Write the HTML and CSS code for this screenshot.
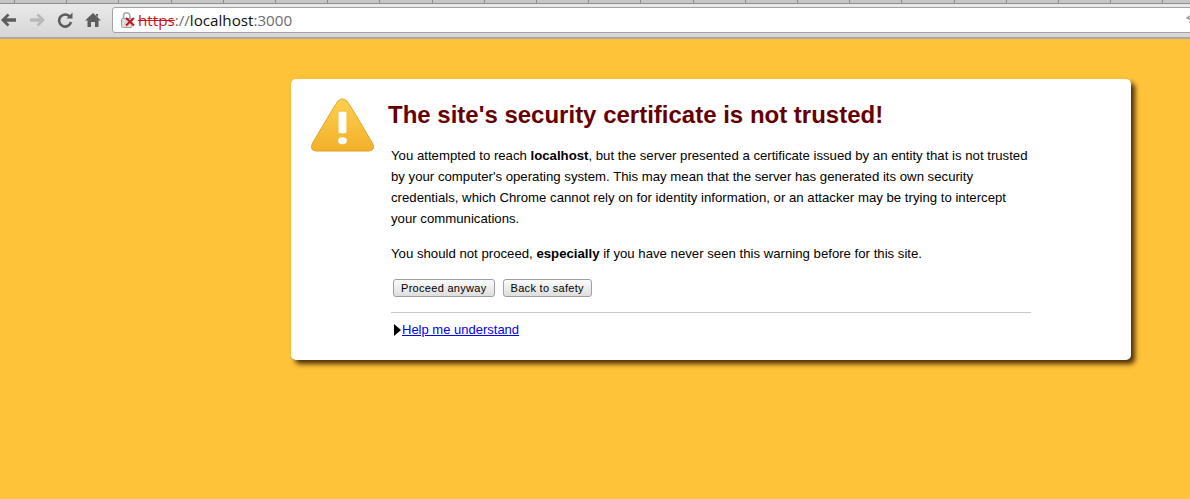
FILE: index.html
```html
<!DOCTYPE html>
<html lang="en">
<head>
  <meta charset="UTF-8" />
  <title>Security Error</title>
  <link rel="stylesheet" href="styles.css">
</head>
<body>
  <div class="tabstrip"></div>
  <div class="toolbar">
    <svg class="nav-icon back" width="17" height="16" viewBox="0 0 17 16"><path d="M1 8 L7.500 1.500 L9.500 3.500 L6.500 6.300 H16 V9.700 H6.500 L9.500 12.500 L7.500 14.500 Z" fill="#5d5d5d"/></svg>
    <svg class="nav-icon forward" width="17" height="16" viewBox="0 0 17 16"><path d="M16 8 L9.500 1.500 L7.500 3.500 L10.500 6.300 H1 V9.700 H10.500 L7.500 12.500 L9.500 14.500 Z" fill="#b9b9b9"/></svg>
    <svg class="nav-icon reload" width="16" height="16" viewBox="0 0 16 16"><path d="M13 5 A6 6 0 1 0 14 10" fill="none" stroke="#5d5d5d" stroke-width="2.600"/><path d="M9.500 6.500 H15.500 V0.500 Z" fill="#5d5d5d"/></svg>
    <svg class="nav-icon home" width="16" height="16" viewBox="0 0 16 16"><path d="M8 1 L16 8.500 H13.500 V15 H10 V10 H6 V15 H2.500 V8.500 H0 Z M11 2 H13 V5 L11 3.200 Z" fill="#5d5d5d"/></svg>
    <div class="omnibox">
      <svg class="lock" width="16" height="17" viewBox="0 0 16 17">
        <path d="M3.500 6.500 V4 A3.200 3.200 0 0 1 9.900 4 V6.500" fill="none" stroke="#a8a8a8" stroke-width="1.600"/>
        <rect x="1.500" y="6.500" width="10.500" height="9" rx="1" fill="#dcdcdc" stroke="#a0a0a0"/>
        <path d="M6 6 L14 13.500 M14 6 L6 13.500" stroke="#c8151b" stroke-width="2"/>
      </svg>
      <span class="url"><s class="scheme">https</s><span class="dim">://</span><span class="host">localhost</span><span class="dim">:3000</span></span>
      <svg class="star" width="6" height="12" viewBox="0 0 6 12"><path d="M6 1 L1 4 L3 5 L6 5 M3 8 L6 8" fill="none" stroke="#9a9a9a" stroke-width="1.500"/></svg>
    </div>
  </div>

  <div class="card">
    <svg class="warning" width="65" height="55" viewBox="0 0 66 56">
      <defs>
        <linearGradient id="warn" x1="0" y1="0" x2="0" y2="1">
          <stop offset="0" stop-color="#fdd04f"/>
          <stop offset="1" stop-color="#f2b02b"/>
        </linearGradient>
      </defs>
      <path d="M28.500 3 Q33 -1 37.500 3 Q40 6 63.500 46 Q67 53 60 54 H6 Q-1 53 2.500 46 Q26 6 28.500 3 Z" fill="url(#warn)" stroke="#dfa024" stroke-width="1"/>
      <rect x="29" y="14" width="8" height="22" rx="1.500" fill="#fff"/>
      <ellipse cx="33" cy="43.500" rx="4.500" ry="3.500" fill="#fff"/>
    </svg>
    <div class="main">
      <h1>The site's security certificate is not trusted!</h1>
      <div class="body-text">
        <p>You attempted to reach <b>localhost</b>, but the server presented a certificate issued by an entity that is not trusted by your computer's operating system. This may mean that the server has generated its own security credentials, which Chrome cannot rely on for identity information, or an attacker may be trying to intercept your communications.</p>
        <p>You should not proceed, <b>especially</b> if you have never seen this warning before for this site.</p>
        <div class="buttons">
          <button type="button">Proceed anyway</button>
          <button type="button">Back to safety</button>
        </div>
        <hr>
        <div class="help"><span class="arrow"></span><a href="#">Help me understand</a></div>
      </div>
    </div>
  </div>
</body>
</html>
```

FILE: styles.css
```css
* {
  box-sizing: border-box;
}

html, body {
  height: 100%;
}

body {
  margin: 0;
  background: #fec339;
  font-family: 'Liberation Sans', Arial, sans-serif;
  font-size: 13px;
  color: #000;
  overflow: hidden;
}

.tabstrip {
  height: 4px;
  border-bottom: 1px solid #8f8f8f;
  background: repeating-linear-gradient(90deg, #c6c6c6 0, #c6c6c6 14px, #8d8d8d 14px, #8d8d8d 15px, #c6c6c6 15px, #c6c6c6 52.200px);
}

.toolbar {
  display: flex;
  align-items: center;
  height: 35px;
  background: linear-gradient(#e9e9e9, #d6d6d6);
  border-bottom: 2px solid #a9a9a9;
  padding-bottom: 1px;
}

.nav-icon {
  flex: none;
}

.forward { margin-left: 12px; }
.reload { margin-left: 11px; }
.home { margin-left: 12px; }

.omnibox {
  display: flex;
  align-items: center;
  flex: 1;
  height: 26px;
  margin-left: 11px;
  margin-right: -6px;
  padding-left: 7px;
  background: #fff;
  border: 1px solid #a4a4a4;
  border-radius: 3px;
}

.url {
  margin-left: 2px;
  font-family: 'Open Sans', 'Liberation Sans', sans-serif;
  font-size: 15.200px;
}

.scheme {
  color: #c8151b;
}

.dim {
  color: #6d6d6d;
}

.host {
  color: #111;
}

.star {
  margin-left: auto;
  margin-right: 3px;
}

.card {
  display: flex;
  width: 840px;
  height: 281px;
  margin: 40px 0 0 291px;
  padding: 19px 0 0 19px;
  background: #fff;
  border-radius: 5px;
  box-shadow: 4px 4px 5px rgba(60, 32, 0, 0.9);
}

.warning {
  flex: none;
}

.main {
  margin-left: 13px;
  width: 660px;
}

h1 {
  margin: 1px 0 0;
  color: #660000;
  font-size: 24px;
  line-height: 32px;
  font-weight: bold;
  white-space: nowrap;
}

.body-text {
  margin: 14px 0 0 3px;
  width: 640px;
  font-size: 13.200px;
  line-height: 21px;
}

p {
  margin: 0 0 14px;
}

.buttons {
  display: flex;
  gap: 8px;
  margin: 15px 0 0 2px;
}

button {
  height: 18px;
  padding: 0 7px;
  font-family: 'Liberation Sans', Arial, sans-serif;
  font-size: 11px;
  letter-spacing: 0.300px;
  color: #000;
  background: linear-gradient(#fbfbfb, #dedede);
  border: 1px solid #a0a0a0;
  border-radius: 3px;
}

hr {
  height: 1px;
  margin: 15px 0 6px;
  border: 0;
  background: #c8c8c8;
}

.help {
  display: flex;
  align-items: center;
  padding-left: 3px;
  font-size: 13px;
}

.arrow {
  width: 0;
  height: 0;
  border-left: 7px solid #000;
  border-top: 6px solid transparent;
  border-bottom: 6px solid transparent;
  margin-right: 1px;
}

a {
  color: #0000ee;
}
```
